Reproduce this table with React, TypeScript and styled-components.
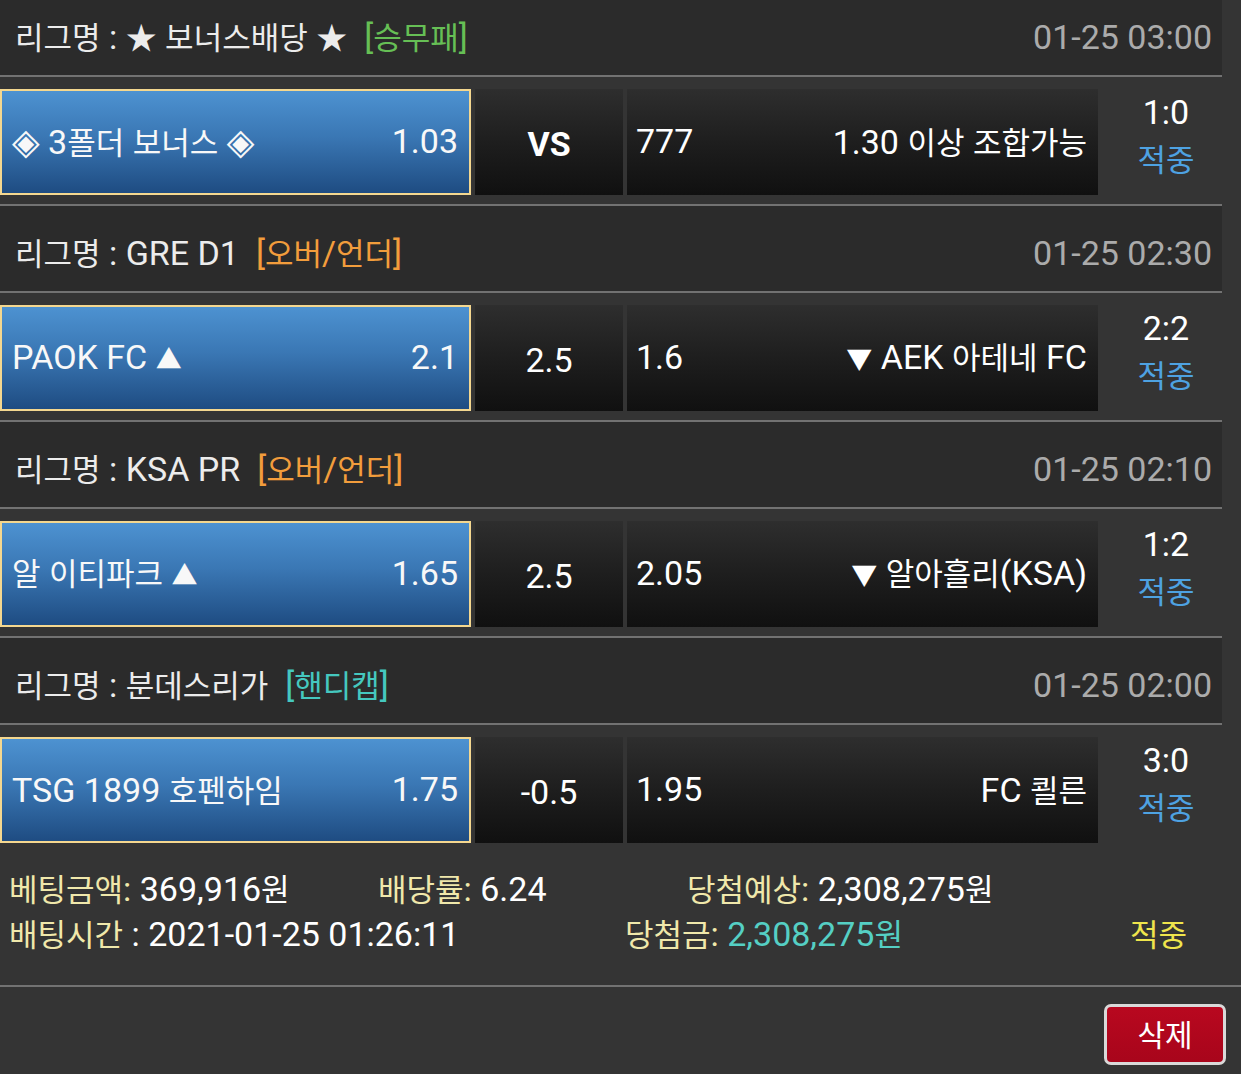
import React from "react";
import styled, { createGlobalStyle } from "styled-components";

const GlobalStyle = createGlobalStyle`
  html, body {
    margin: 0;
    padding: 0;
    background: #343434;
    overflow: hidden;
  }
  body {
    font-family: Roboto, "Noto Sans CJK KR", sans-serif;
    font-size: 34px;
    color: #ffffff;
  }
  * { box-sizing: border-box; }
`;

const Ko = styled.span`
  font-family: "Noto Sans CJK KR", sans-serif;
  font-size: 31px;
`;

const Arrow = styled.span`
  font-family: "Noto Sans CJK KR", sans-serif;
  font-size: 26px;
`;

const Diamond = styled.span`
  font-family: "DejaVu Sans", sans-serif;
  font-size: 36px;
`;

const SPLIT = /([\u1100-\u11FF\u3130-\u318F\uAC00-\uD7A3\u2605]+|\u25C8|[\u25B2\u25BC])/;
const HANGUL = /^[\u1100-\u11FF\u3130-\u318F\uAC00-\uD7A3\u2605]+$/;

function T({ children }: { children: string }) {
  const parts = children.split(SPLIT);
  return (
    <>
      {parts.map((p, i) => {
        if (!p) return null;
        if (p === "\u25C8") return <Diamond key={i}>{p}</Diamond>;
        if (p === "\u25B2" || p === "\u25BC") return <Arrow key={i}>{p}</Arrow>;
        if (HANGUL.test(p)) return <Ko key={i}>{p}</Ko>;
        return <React.Fragment key={i}>{p}</React.Fragment>;
      })}
    </>
  );
}

const Page = styled.div`
  width: 1241px;
  min-height: 1074px;
  background: #343434;
`;

const List = styled.div`
  width: 1222px;
  margin-top: -10px;
`;

const Header = styled.div`
  height: 87px;
  display: flex;
  align-items: center;
  justify-content: space-between;
  padding: 8px 10px 0 15px;
  background: #2b2b2b;
  border-bottom: 2px solid #727272;
  line-height: 40px;
`;

const League = styled.div`
  color: #ececec;
  white-space: nowrap;
`;

const Tag = styled.span<{ $color: string }>`
  color: ${(p) => p.$color};
  margin-left: 17px;
`;

const DateText = styled.div`
  color: #ababab;
`;

const Row = styled.div<{ $last?: boolean }>`
  display: flex;
  padding: 12px 0 9px;
  border-bottom: ${(p) => (p.$last ? "none" : "2px solid #727272")};
`;

const HomeCell = styled.div`
  width: 471px;
  height: 106px;
  display: flex;
  align-items: center;
  justify-content: space-between;
  padding: 0 11px 2px 10px;
  border: 2px solid #f4d78f;
  background: linear-gradient(to bottom, #4d92d1 0%, #3a77b4 45%, #1e4c82 100%);
  color: #f8f8f8;
  white-space: nowrap;
  line-height: 40px;
`;

const DarkCell = styled.div`
  height: 106px;
  display: flex;
  align-items: center;
  background: linear-gradient(to bottom, #2e2e2e 0%, #1e1e1e 50%, #101010 100%);
  white-space: nowrap;
  line-height: 40px;
`;

const MidCell = styled(DarkCell)<{ $bold?: boolean }>`
  width: 148px;
  margin-left: 4px;
  justify-content: center;
  padding-top: 4px;
  font-weight: ${(p) => (p.$bold ? 700 : 400)};
`;

const AwayCell = styled(DarkCell)`
  width: 471px;
  margin-left: 4px;
  justify-content: space-between;
  padding: 0 11px 2px 9px;
`;

const ResultCell = styled.div`
  width: 124px;
  height: 106px;
  display: flex;
  flex-direction: column;
  align-items: center;
  padding-left: 12px;
  line-height: 46px;
`;

const Score = styled.div`
  color: #ffffff;
`;

const Hit = styled.div<{ $color: string }>`
  color: ${(p) => p.$color};
`;

const Footer = styled.div`
  padding: 14px 0 29px 9px;
  white-space: nowrap;
`;

const FLine = styled.div`
  display: flex;
  align-items: center;
  height: 45px;
  line-height: 40px;
`;

const FCell = styled.div<{ $w?: number }>`
  width: ${(p) => (p.$w ? `${p.$w}px` : "auto")};
  flex: ${(p) => (p.$w ? "none" : "1")};
`;

const Label = styled.span`
  color: #f0e8ab;
`;

const Value = styled.span<{ $color?: string }>`
  color: ${(p) => p.$color || "#ffffff"};
`;

const FullDivider = styled.div`
  height: 2px;
  background: #727272;
`;

const Actions = styled.div`
  display: flex;
  justify-content: flex-end;
  padding: 17px 15px 0 0;
`;

const DeleteButton = styled.button`
  width: 122px;
  height: 61px;
  border: 3px solid #d9d9d9;
  border-radius: 7px;
  background: linear-gradient(to bottom, #b8081f 0%, #a8051b 100%);
  color: #ffffff;
  font-family: "Noto Sans CJK KR", sans-serif;
  font-size: 30px;
  line-height: 40px;
  padding: 0 0 4px;
  cursor: pointer;
`;

type Game = {
  league: string;
  tag: string;
  tagColor: string;
  date: string;
  home: string;
  homeOdds: string;
  mid: string;
  midBold?: boolean;
  awayOdds: string;
  away: string;
  score: string;
};

const games: Game[] = [
  {
    league: "리그명 : ★ 보너스배당 ★",
    tag: "[승무패]",
    tagColor: "#66bf55",
    date: "01-25 03:00",
    home: "◈ 3폴더 보너스 ◈",
    homeOdds: "1.03",
    mid: "VS",
    midBold: true,
    awayOdds: "777",
    away: "1.30 이상 조합가능",
    score: "1:0",
  },
  {
    league: "리그명 : GRE D1",
    tag: "[오버/언더]",
    tagColor: "#f29d3c",
    date: "01-25 02:30",
    home: "PAOK FC ▲",
    homeOdds: "2.1",
    mid: "2.5",
    awayOdds: "1.6",
    away: "▼ AEK 아테네 FC",
    score: "2:2",
  },
  {
    league: "리그명 : KSA PR",
    tag: "[오버/언더]",
    tagColor: "#f29d3c",
    date: "01-25 02:10",
    home: "알 이티파크 ▲",
    homeOdds: "1.65",
    mid: "2.5",
    awayOdds: "2.05",
    away: "▼ 알아흘리(KSA)",
    score: "1:2",
  },
  {
    league: "리그명 : 분데스리가",
    tag: "[핸디캡]",
    tagColor: "#45c8bf",
    date: "01-25 02:00",
    home: "TSG 1899 호펜하임",
    homeOdds: "1.75",
    mid: "-0.5",
    awayOdds: "1.95",
    away: "FC 쾰른",
    score: "3:0",
  },
];

export default function App() {
  return (
    <Page>
      <GlobalStyle />
      <List>
        {games.map((g, i) => (
          <React.Fragment key={i}>
            <Header>
              <League>
                <T>{g.league}</T>
                <Tag $color={g.tagColor}>
                  <T>{g.tag}</T>
                </Tag>
              </League>
              <DateText>{g.date}</DateText>
            </Header>
            <Row $last={i === games.length - 1}>
              <HomeCell>
                <span>
                  <T>{g.home}</T>
                </span>
                <span>{g.homeOdds}</span>
              </HomeCell>
              <MidCell $bold={g.midBold}>{g.mid}</MidCell>
              <AwayCell>
                <span>{g.awayOdds}</span>
                <span>
                  <T>{g.away}</T>
                </span>
              </AwayCell>
              <ResultCell>
                <Score>{g.score}</Score>
                <Hit $color="#4ea2e2">
                  <T>적중</T>
                </Hit>
              </ResultCell>
            </Row>
          </React.Fragment>
        ))}
      </List>
      <Footer>
        <FLine>
          <FCell $w={369}>
            <Label>
              <T>베팅금액:</T>
            </Label>
            <Value>
              <T> 369,916원</T>
            </Value>
          </FCell>
          <FCell $w={309}>
            <Label>
              <T>배당률:</T>
            </Label>
            <Value> 6.24</Value>
          </FCell>
          <FCell>
            <Label>
              <T>당첨예상:</T>
            </Label>
            <Value>
              <T> 2,308,275원</T>
            </Value>
          </FCell>
        </FLine>
        <FLine>
          <FCell $w={616}>
            <Label>
              <T>배팅시간</T>
            </Label>
            <Value> : 2021-01-25 01:26:11</Value>
          </FCell>
          <FCell $w={505}>
            <Label>
              <T>당첨금:</T>
            </Label>
            <Value $color="#55cfc4">
              <T> 2,308,275원</T>
            </Value>
          </FCell>
          <FCell>
            <Value $color="#efe54c">
              <T>적중</T>
            </Value>
          </FCell>
        </FLine>
      </Footer>
      <FullDivider />
      <Actions>
        <DeleteButton>삭제</DeleteButton>
      </Actions>
    </Page>
  );
}
